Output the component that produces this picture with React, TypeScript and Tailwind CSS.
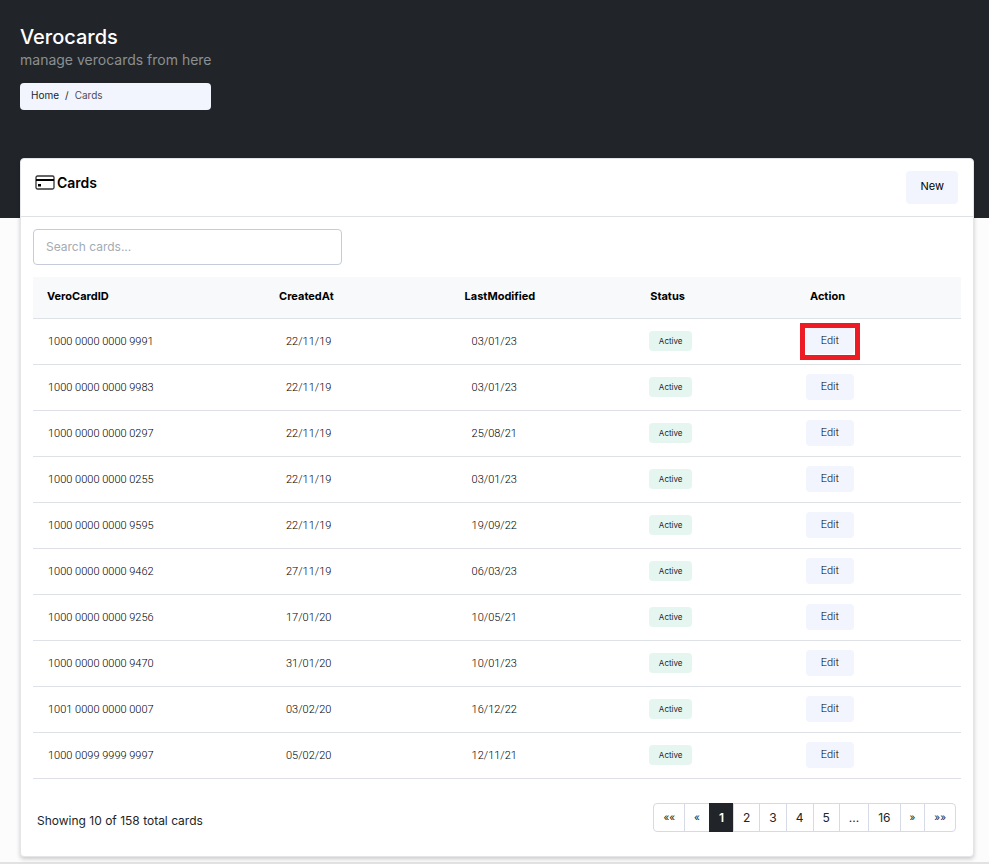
import React, { useState } from 'react';
import clsx from 'clsx';

interface CardRecord {
  id: string;
  createdAt: string;
  lastModified: string;
}

const cards: CardRecord[] = [
  { id: '1000 0000 0000 9991', createdAt: '22/11/19', lastModified: '03/01/23' },
  { id: '1000 0000 0000 9983', createdAt: '22/11/19', lastModified: '03/01/23' },
  { id: '1000 0000 0000 0297', createdAt: '22/11/19', lastModified: '25/08/21' },
  { id: '1000 0000 0000 0255', createdAt: '22/11/19', lastModified: '03/01/23' },
  { id: '1000 0000 0000 9595', createdAt: '22/11/19', lastModified: '19/09/22' },
  { id: '1000 0000 0000 9462', createdAt: '27/11/19', lastModified: '06/03/23' },
  { id: '1000 0000 0000 9256', createdAt: '17/01/20', lastModified: '10/05/21' },
  { id: '1000 0000 0000 9470', createdAt: '31/01/20', lastModified: '10/01/23' },
  { id: '1001 0000 0000 0007', createdAt: '03/02/20', lastModified: '16/12/22' },
  { id: '1000 0099 9999 9997', createdAt: '05/02/20', lastModified: '12/11/21' },
];

const pages = ['««', '«', '1', '2', '3', '4', '5', '...', '16', '»', '»»'];

function CardIcon() {
  return (
    <svg width="20" height="16" viewBox="0 0 20 16" fill="none" aria-hidden="true">
      <rect x="1" y="1" width="18" height="13" rx="1.5" stroke="#333" strokeWidth="1.3" />
      <rect x="1" y="4" width="18" height="2" fill="#000" />
      <rect x="3" y="9" width="3" height="2.5" fill="#000" />
    </svg>
  );
}

function CardsTable({ records }: { records: CardRecord[] }) {
  return (
    <table className="mt-3 w-full table-fixed border-collapse text-left">
      <colgroup>
        <col className="w-[25%]" />
        <col className="w-[20%]" />
        <col className="w-[20%]" />
        <col className="w-[17%]" />
        <col />
      </colgroup>
      <thead className="bg-[#f8f9fb] text-[11px] text-black">
        <tr className="h-[41px] border-b border-[#dee2e6]">
          <th scope="col" className="px-3.5 pb-0.5 font-bold">VeroCardID</th>
          <th scope="col" className="px-3.5 pb-0.5 font-bold">CreatedAt</th>
          <th scope="col" className="px-3.5 pb-0.5 font-bold">LastModified</th>
          <th scope="col" className="px-3.5 pb-0.5 font-bold">Status</th>
          <th scope="col" className="px-4 pb-0.5 font-bold">Action</th>
        </tr>
      </thead>
      <tbody className="font-['Roboto',sans-serif] text-[11px] font-light text-black">
        {records.map((card, index) => (
          <tr key={card.id} className="h-[46px] border-b border-[#dee2e6]">
            <td className="pt-0.5 pl-[15px]">{card.id}</td>
            <td className="pt-0.5 pl-[21px]">{card.createdAt}</td>
            <td className="pt-0.5 pl-[21px]">{card.lastModified}</td>
            <td className="pl-[13px]">
              <span className="flex h-5 w-[43px] items-center justify-center rounded bg-[#e5f6f0] font-['Inter',sans-serif] text-[8px] font-normal text-[#212529]">
                Active
              </span>
            </td>
            <td className="pl-3">
              <div className="relative h-[26px] w-12">
                <button type="button" className="h-full w-full rounded bg-[#f2f5fd]">
                  Edit
                </button>
                {index === 0 && (
                  <span className="pointer-events-none absolute -inset-x-1.5 -top-[5px] -bottom-1.5 border-5 border-[#ed1c24]" />
                )}
              </div>
            </td>
          </tr>
        ))}
      </tbody>
    </table>
  );
}

function Pagination() {
  const [page, setPage] = useState('1');

  return (
    <nav aria-label="Pagination" className="flex h-[29px] text-xs text-[#212529]">
      {pages.map((label) => (
        <button
          key={label}
          type="button"
          onClick={() => /\d/.test(label) && setPage(label)}
          className={clsx(
            '-ml-px border px-[9px] pt-0.5 first:ml-0 first:rounded-l last:rounded-r',
            /[«»]/.test(label) && 'text-[10px]',
            label === page
              ? 'border-[#212529] bg-[#212529] font-semibold text-white'
              : 'border-[#d5dae6] bg-white'
          )}
        >
          {label}
        </button>
      ))}
    </nav>
  );
}

export default function App() {
  const [search, setSearch] = useState('');
  const filtered = cards.filter((c) => c.id.includes(search));

  return (
    <div className="min-h-screen bg-[#fcfcfc] font-['Inter',sans-serif]">
      <header className="bg-[#212529] px-5 pt-6 pb-[108px]">
        <h1 className="text-xl leading-[26px] font-medium text-white">Verocards</h1>
        <p className="text-sm leading-5 text-[#8b8f92]">manage verocards from here</p>
        <nav
          aria-label="Breadcrumb"
          className="mt-[13px] flex h-[27px] w-[191px] items-center gap-1.5 rounded bg-[#f2f5fd] px-[11px] pb-0.5 text-[10px] text-[#212529]"
        >
          <a href="#home">Home</a>
          <span>/</span>
          <span className="text-[#4f4b5c]">Cards</span>
        </nav>
      </header>

      <main className="relative mr-[15px] -mt-[60px] ml-5 rounded border border-[#e3e5e8] bg-white shadow-[0_2px_4px_rgba(0,0,0,0.2)]">
        <div className="flex items-start justify-between border-b border-[#dee2e6] py-3 pr-[15px] pl-3.5">
          <h2 className="flex h-6 items-center gap-0.5 text-sm font-semibold text-black">
            <CardIcon />
            Cards
          </h2>
          <button type="button" className="h-[33px] rounded bg-[#f2f5fd] px-3.5 pb-0.5 text-[11px] text-black">
            New
          </button>
        </div>

        <div className="px-3 pt-3 pb-6">
          <input
            type="text"
            aria-label="Search cards"
            placeholder="Search cards..."
            value={search}
            onChange={(e) => setSearch(e.target.value)}
            className="block h-9 w-1/3 rounded border border-[#c5cbd8] bg-white px-3 pb-0.5 text-xs placeholder:text-[#a3abb3]"
          />
          <CardsTable records={filtered} />
          <div className="mt-6 flex items-center justify-between pr-[5px] pl-1">
            <p className="pt-2 text-xs text-[#212529]">Showing 10 of 158 total cards</p>
            <Pagination />
          </div>
        </div>
      </main>

      <footer className="mt-[5px] border-t-2 border-[#e2e2e2]" />
    </div>
  );
}
